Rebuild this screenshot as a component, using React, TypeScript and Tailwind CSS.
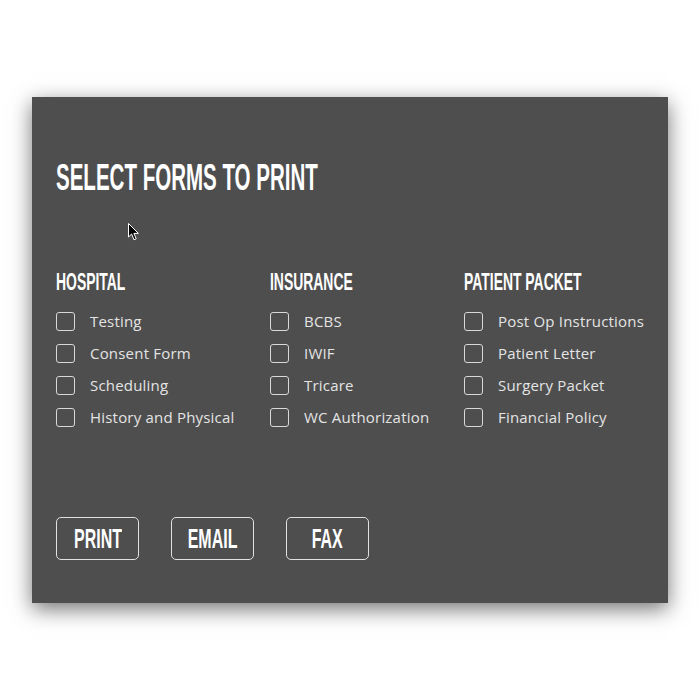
import { useState } from "react";

const groups = [
  { title: "HOSPITAL", width: "w-[214px]", items: ["Testing", "Consent Form", "Scheduling", "History and Physical"] },
  { title: "INSURANCE", width: "w-[194px]", items: ["BCBS", "IWIF", "Tricare", "WC Authorization"] },
  { title: "PATIENT PACKET", width: "w-[190px]", items: ["Post Op Instructions", "Patient Letter", "Surgery Packet", "Financial Policy"] },
];

const display = "font-['Liberation_Sans_Narrow','Liberation_Sans',sans-serif] font-bold whitespace-nowrap";

function Checkbox({ label }: { label: string }) {
  const [checked, setChecked] = useState(false);
  return (
    <label className="flex h-[32px] cursor-pointer items-center gap-[15px]">
      <button
        type="button"
        onClick={() => setChecked(!checked)}
        className="flex h-[19px] w-[19px] items-center justify-center rounded-[3px] border border-[#d9d9d9]"
      >
        {checked && <span className="h-[9px] w-[9px] rounded-[1px] bg-[#e6e6e6]" />}
      </button>
      <span className="font-['Open_Sans',sans-serif] text-[15px] tracking-[0.2px] text-[#e4e4e4]">{label}</span>
    </label>
  );
}

function Cursor() {
  return (
    <svg className="absolute left-[96px] top-[126px]" width="12" height="18" viewBox="0 0 12 18">
      <path d="M0.5 0.5 L0.5 14 L3.6 11 L6 16.8 L8.2 15.8 L5.9 10.4 L10.4 10.4 Z" fill="#000" stroke="#fff" strokeWidth="1" strokeLinejoin="round" />
    </svg>
  );
}

export default function App() {
  return (
    <div className="h-[700px] w-[700px] bg-white pl-[32px] pt-[97px]">
      <div className="relative flex h-[506px] w-[636px] flex-col bg-[#4e4e4e] pl-[24px] shadow-[0_6px_20px_rgba(0,0,0,0.55)]">
        <h1 className={`${display} mt-[61px] h-[40px] text-[36px] leading-[40px] text-white`}>
          <span className="inline-block origin-left scale-x-[0.57]">SELECT FORMS TO PRINT</span>
        </h1>
        <Cursor />
        <div className="mt-[70px] flex">
          {groups.map((g) => (
            <div key={g.title} className={`${g.width} flex flex-col`}>
              <h2 className={`${display} mb-[9px] h-[28px] text-[24px] leading-[28px] text-white`}>
                <span className="inline-block origin-left scale-x-[0.58]">{g.title}</span>
              </h2>
              {g.items.map((item) => (
                <Checkbox key={item} label={item} />
              ))}
            </div>
          ))}
        </div>
        <div className="mt-[84px] flex gap-[32px]">
          {["PRINT", "EMAIL", "FAX"].map((b) => (
            <button
              key={b}
              type="button"
              className={`${display} flex h-[43px] w-[83px] items-center justify-center rounded-[5px] border border-[#e0e0e0] text-[28px] text-white`}
            >
              <span className="inline-block scale-x-[0.57]">{b}</span>
            </button>
          ))}
        </div>
      </div>
    </div>
  );
}
